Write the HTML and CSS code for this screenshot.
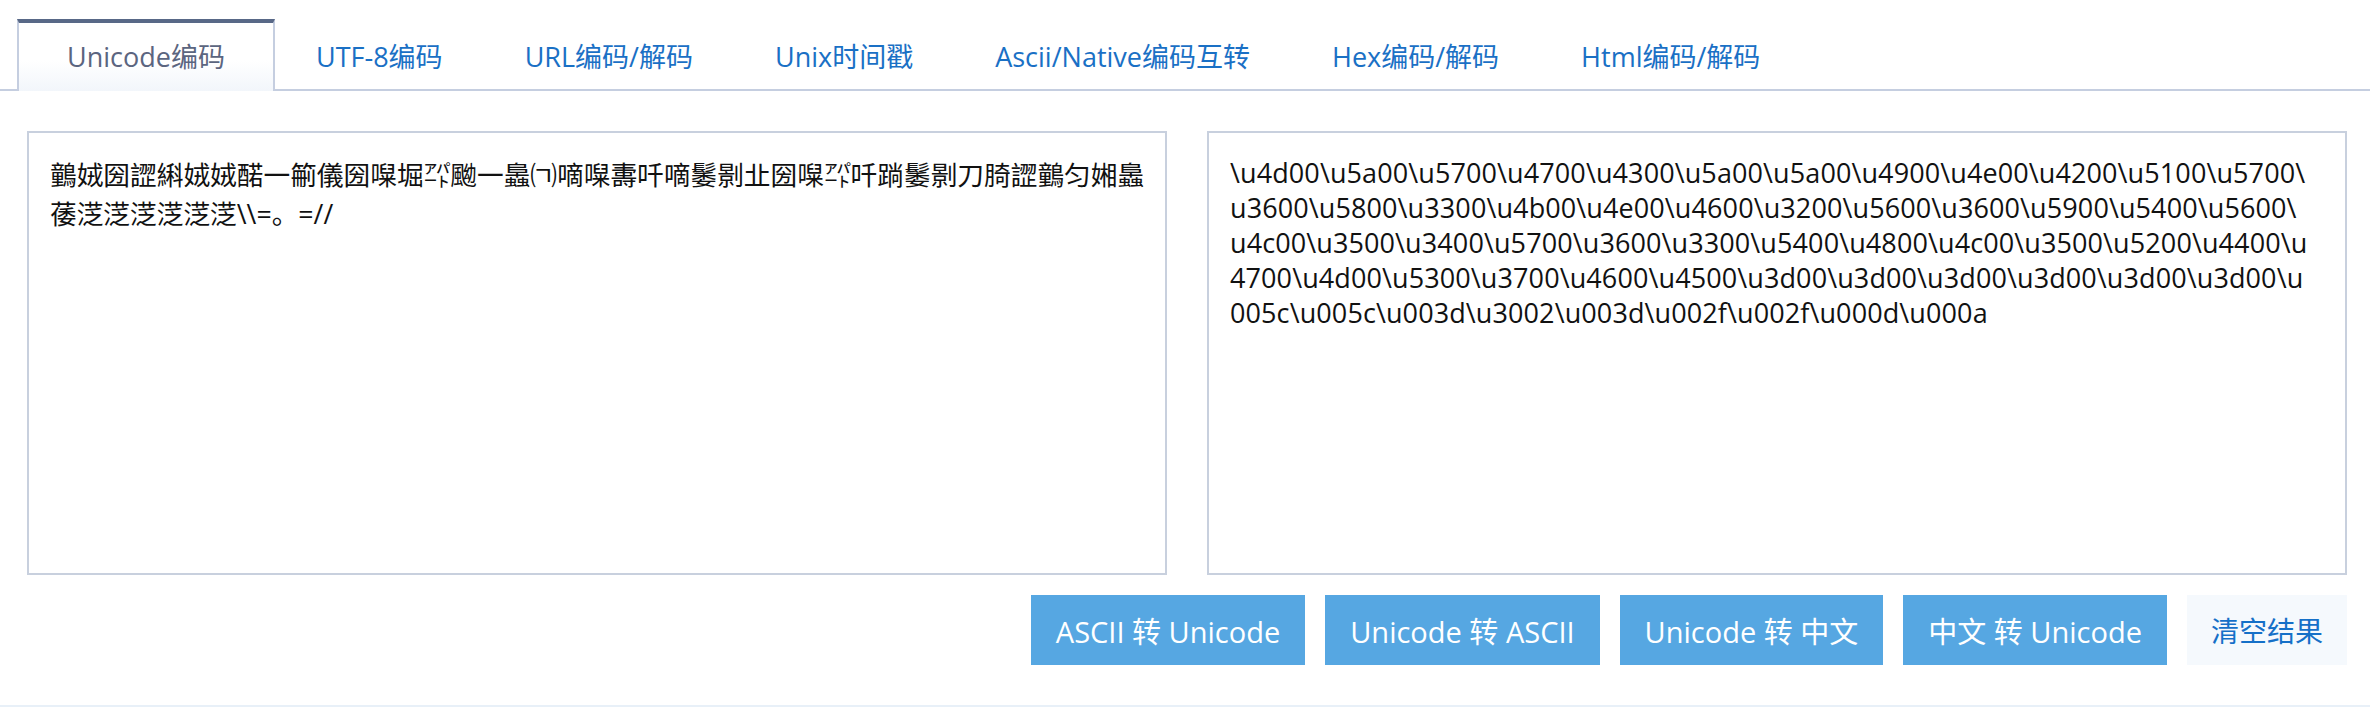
FILE: index.html
```html
<!DOCTYPE html>
<html lang="zh-CN">
<head>
<meta charset="utf-8">
<title>Unicode编码</title>
<link rel="stylesheet" href="styles.css">
</head>
<body>
<ul class="tabs">
  <li class="tab active">Unicode编码</li>
  <li class="tab">UTF-8编码</li>
  <li class="tab">URL编码/解码</li>
  <li class="tab">Unix时间戳</li>
  <li class="tab">Ascii/Native编码互转</li>
  <li class="tab">Hex编码/解码</li>
  <li class="tab">Html编码/解码</li>
</ul>
<div class="editors">
<textarea class="box src" wrap="off" readonly>䴀娀圀䜀䌀娀娀䤀一䈀儀圀㘀堀㌀䬀一䘀㈀嘀㘀夀吀嘀䰀㔀㐀圀㘀㌀吀䠀䰀㔀刀䐀䜀䴀匀㜀䘀
䔀㴀㴀㴀㴀㴀㴀\\=。=//</textarea>
<textarea class="box out" wrap="off" readonly>\u4d00\u5a00\u5700\u4700\u4300\u5a00\u5a00\u4900\u4e00\u4200\u5100\u5700\
u3600\u5800\u3300\u4b00\u4e00\u4600\u3200\u5600\u3600\u5900\u5400\u5600\
u4c00\u3500\u3400\u5700\u3600\u3300\u5400\u4800\u4c00\u3500\u5200\u4400\u
4700\u4d00\u5300\u3700\u4600\u4500\u3d00\u3d00\u3d00\u3d00\u3d00\u3d00\u
005c\u005c\u003d\u3002\u003d\u002f\u002f\u000d\u000a</textarea>
</div>
<div class="actions">
  <button class="btn">ASCII 转 Unicode</button>
  <button class="btn">Unicode 转 ASCII</button>
  <button class="btn">Unicode 转 中文</button>
  <button class="btn">中文 转 Unicode</button>
  <button class="btn light">清空结果</button>
</div>
<div class="band"></div>
</body>
</html>
```
FILE: styles.css
```css
html {
  overflow: hidden;
}
body {
  margin: 0;
  background: #ffffff;
  font-family: "Open Sans", "Noto Sans CJK SC", sans-serif;
}
.tabs {
  display: flex;
  align-items: flex-start;
  margin: 19px 0 0;
  padding: 0 0 0 17px;
  list-style: none;
  height: 70px;
  border-bottom: 2px solid #c5cee0;
}
.tab {
  box-sizing: border-box;
  height: 72px;
  margin-bottom: -2px;
  padding: 0 41px;
  border-top: 4px solid transparent;
  font-size: 27px;
  line-height: 68px;
  color: #1a70c5;
  white-space: nowrap;
}
.tab.active {
  width: 258px;
  padding: 0;
  text-align: center;
  border: 2px solid #c5cee0;
  border-top: 4px solid #586887;
  border-bottom: 0;
  background: linear-gradient(#ffffff 55%, #f2f6fb);
  color: #5b6580;
}
.editors {
  display: grid;
  grid-template-columns: 1fr 1fr;
  gap: 40px;
  padding: 40px 23px 0 27px;
}
.box {
  display: block;
  width: 100%;
  height: 444px;
  margin: 0;
  box-sizing: border-box;
  border: 2px solid #c8d0de;
  padding: 22px 8px 22px 21px;
  font-family: "Open Sans", "Noto Sans CJK SC", sans-serif;
  font-size: 27px;
  line-height: 35px;
  letter-spacing: 0.1px;
  color: #111111;
  background: #ffffff;
  resize: none;
  overflow: hidden;
  white-space: pre;
  outline: none;
}
.src {
  font-size: 26.7px;
  line-height: 39px;
  letter-spacing: 0;
}
.actions {
  display: flex;
  justify-content: flex-end;
  gap: 20px;
  padding: 20px 23px 0 0;
}
.btn {
  height: 70px;
  padding: 0 25px;
  border: 0;
  border-radius: 0;
  background: #56a7e2;
  color: #ffffff;
  font-family: "Open Sans", "Noto Sans CJK SC", sans-serif;
  font-size: 29px;
  white-space: nowrap;
}
.btn.light {
  padding: 0 24px;
  background: #f5f9fd;
  color: #1570c8;
  font-size: 28px;
}
.band {
  margin-top: 40px;
  height: 2px;
  background: #e8f0f8;
}
```
